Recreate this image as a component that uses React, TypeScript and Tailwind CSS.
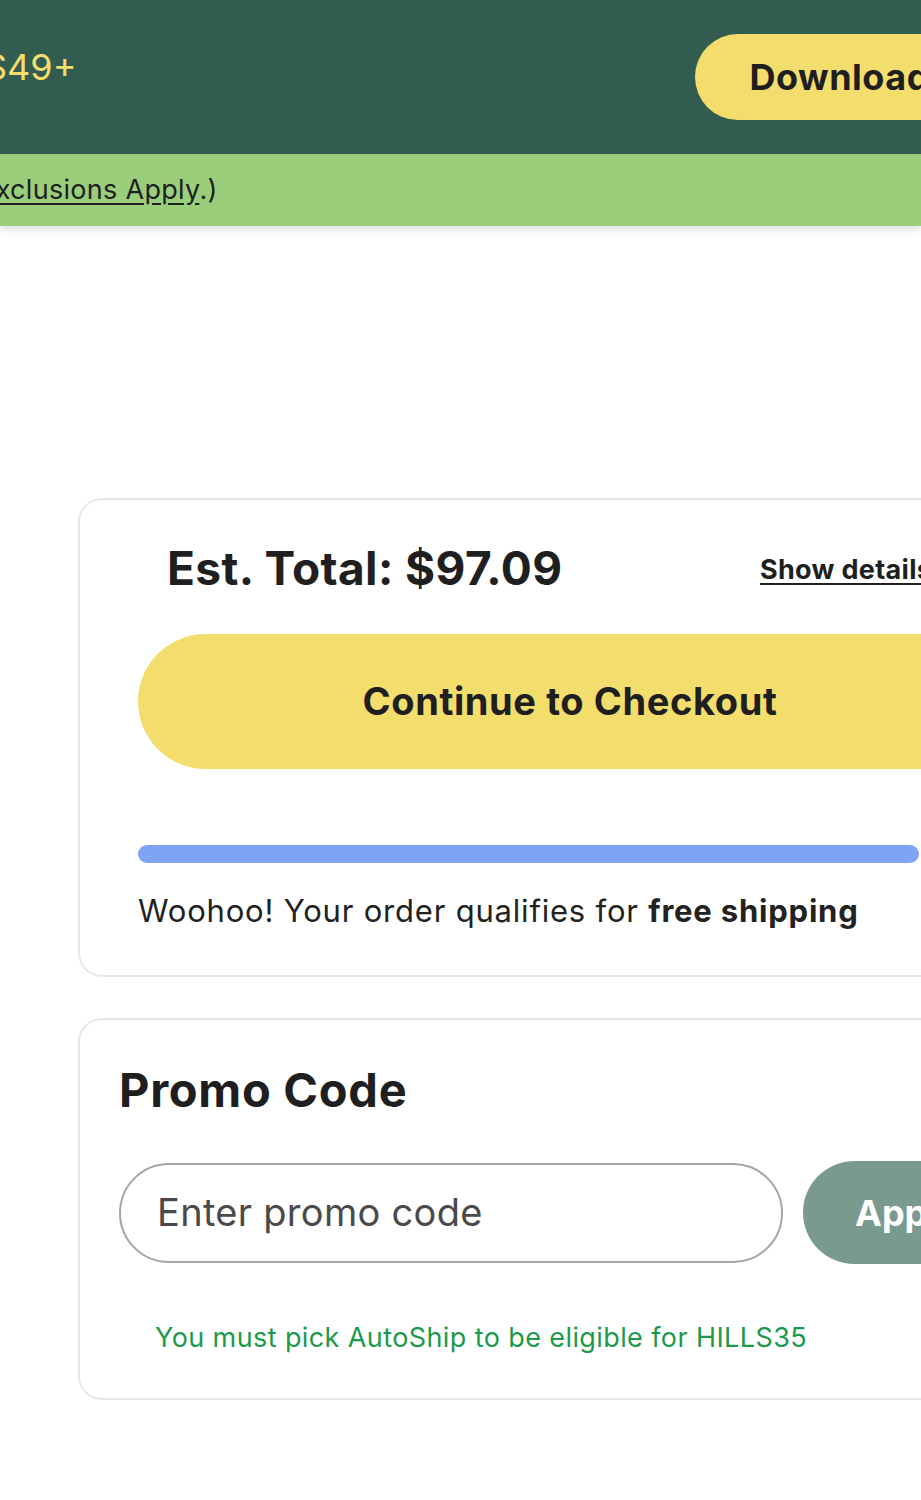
import React from 'react';

const font = { fontFamily: 'Inter, "Noto Sans", sans-serif' };

const App: React.FC = () => {
  return (
    <div className="w-[921px] h-[1500px] overflow-hidden bg-white text-[#1f1f1f]" style={font}>
      {/* Promo banner */}
      <div className="relative z-10 shadow-[0_4px_8px_rgba(0,0,0,0.12)]">
        <div className="h-[154px] bg-[#325c50] flex items-center whitespace-nowrap">
          <span className="ml-[-16px] mb-[20px] text-[36px] text-[#f3dd6d] font-normal">$49+</span>
          <button className="ml-[618px] h-[86px] px-[55px] rounded-full bg-[#f3dd6d] text-[36px] font-bold text-[#1f1f1f] shrink-0 tracking-[0.5px]">
            Download the App
          </button>
        </div>
        <div className="h-[72px] bg-[#9ace7a] flex items-center whitespace-nowrap">
          <span className="ml-[-31px] text-[27px] tracking-[0.3px] text-[#1f1f1f]">
            (<span className="underline underline-offset-4">Exclusions Apply</span>.)
          </span>
        </div>
      </div>

      {/* Estimated total */}
      <div className="ml-[78px] mt-[272px] w-[900px] border-2 border-[#e8e8e8] rounded-[24px] pl-[58px] pt-[40px] pb-[46px]">
        <div className="flex items-center pl-[29px]">
          <span className="w-[593px] shrink-0 text-[46px] font-bold tracking-[0.4px] leading-[56px] whitespace-nowrap">Est. Total: $97.09</span>
          <span className="mt-[4px] text-[27px] font-bold underline underline-offset-4 decoration-2 whitespace-nowrap tracking-[0.3px]">Show details</span>
        </div>
        <button className="mt-[38px] w-[864px] h-[135px] rounded-full bg-[#f3dd6d] text-[38px] font-bold tracking-[0.6px] flex items-center justify-center">
          Continue to Checkout
        </button>
        <div className="mt-[76px] w-[781px] h-[18px] rounded-full bg-[#7fa3f5]" />
        <p className="mt-[30px] text-[31px] leading-[36px] tracking-[0.8px] text-[#222] whitespace-nowrap">
          Woohoo! Your order qualifies for <span className="font-bold">free shipping</span>
        </p>
      </div>

      {/* Promo code */}
      <div className="ml-[78px] mt-[41px] w-[900px] border-2 border-[#e8e8e8] rounded-[24px] pl-[39px] pt-[43px] pb-[44px]">
        <h2 className="text-[47px] font-bold leading-[54px] tracking-[0.7px] whitespace-nowrap">Promo Code</h2>
        <div className="mt-[44px] flex items-center gap-[20px]">
          <div className="w-[664px] shrink-0 h-[100px] rounded-full border-2 border-[#a8a4a4] flex items-center pl-[36px]">
            <span className="text-[38px] tracking-[0.3px] text-[#4a4a4a] whitespace-nowrap">Enter promo code</span>
          </div>
          <button className="w-[200px] shrink-0 h-[103px] rounded-full bg-[#7a9a90] text-white text-[36px] font-bold text-left pl-[52px]">
            Apply
          </button>
        </div>
        <p className="mt-[58px] pl-[36px] text-[27px] leading-[32px] tracking-[0.4px] text-[#1b9a4b] whitespace-nowrap">
          You must pick AutoShip to be eligible for HILLS35
        </p>
      </div>
    </div>
  );
};

export default App;
